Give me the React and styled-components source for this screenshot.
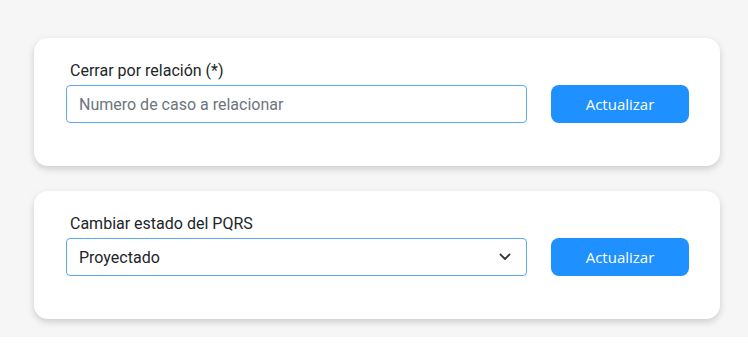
import React, { useState } from 'react';
import styled, { createGlobalStyle } from 'styled-components';

const GlobalStyle = createGlobalStyle`
  * { box-sizing: border-box; }
  body {
    margin: 0;
    background: #ffffff;
    font-family: Roboto, "Liberation Sans", sans-serif;
  }
`;

const Page = styled.main`
  background: #f6f6f6;
  padding: 38px 28px 18px 34px;
  display: flex;
  flex-direction: column;
  gap: 25px;
`;

const Card = styled.section`
  background: #ffffff;
  border-radius: 14px;
  box-shadow: 0 3px 7px rgba(0, 0, 0, 0.17);
  height: 128px;
  padding: 24px 31px 0 32px;
`;

const Label = styled.label`
  display: block;
  margin: 0 0 5px 4px;
  font-size: 16px;
  line-height: 18px;
  color: #212529;
`;

const Row = styled.div`
  display: flex;
  align-items: center;
  gap: 24px;
`;

const FieldWrap = styled.div`
  position: relative;
  flex: 1;
`;

const Input = styled.input`
  width: 100%;
  height: 38px;
  padding: 0 12px;
  border: 1px solid #5aa8f5;
  border-radius: 4px;
  background: #fff;
  font-family: Roboto, "Liberation Sans", sans-serif;
  font-size: 16px;
  color: #212529;
  outline: none;

  &::placeholder {
    color: #6c757d;
  }
`;

const Select = styled.select`
  width: 100%;
  height: 38px;
  padding: 0 36px 0 12px;
  border: 1px solid #5aa8f5;
  border-radius: 4px;
  background: #fff;
  font-family: Roboto, "Liberation Sans", sans-serif;
  font-size: 16px;
  color: #212529;
  appearance: none;
  outline: none;
`;

const Chevron = styled.svg`
  position: absolute;
  right: 16px;
  top: 50%;
  transform: translateY(-50%);
  pointer-events: none;
`;

const Button = styled.button`
  width: 138px;
  height: 38px;
  border: none;
  border-radius: 8px;
  background: #1e90ff;
  color: #ffffff;
  font-family: "Open Sans", "Noto Sans", sans-serif;
  font-size: 15px;
  cursor: pointer;
`;

const App = () => {
  const [caso, setCaso] = useState('');
  const [estado, setEstado] = useState('Proyectado');

  return (
    <>
      <GlobalStyle />
      <Page>
        <Card>
          <Label htmlFor="caso">Cerrar por relación (*)</Label>
          <Row>
            <FieldWrap>
              <Input
                id="caso"
                placeholder="Numero de caso a relacionar"
                value={caso}
                onChange={(e) => setCaso(e.target.value)}
              />
            </FieldWrap>
            <Button>Actualizar</Button>
          </Row>
        </Card>

        <Card>
          <Label htmlFor="estado">Cambiar estado del PQRS</Label>
          <Row>
            <FieldWrap>
              <Select id="estado" value={estado} onChange={(e) => setEstado(e.target.value)}>
                <option>Proyectado</option>
                <option>Radicado</option>
                <option>En trámite</option>
                <option>Cerrado</option>
              </Select>
              <Chevron width="12" height="8" viewBox="0 0 12 8">
                <path d="M1.5 1.5 L6 6 L10.5 1.5" fill="none" stroke="#343a40" strokeWidth="1.8" strokeLinecap="round" strokeLinejoin="round" />
              </Chevron>
            </FieldWrap>
            <Button>Actualizar</Button>
          </Row>
        </Card>
      </Page>
    </>
  );
};

export default App;
